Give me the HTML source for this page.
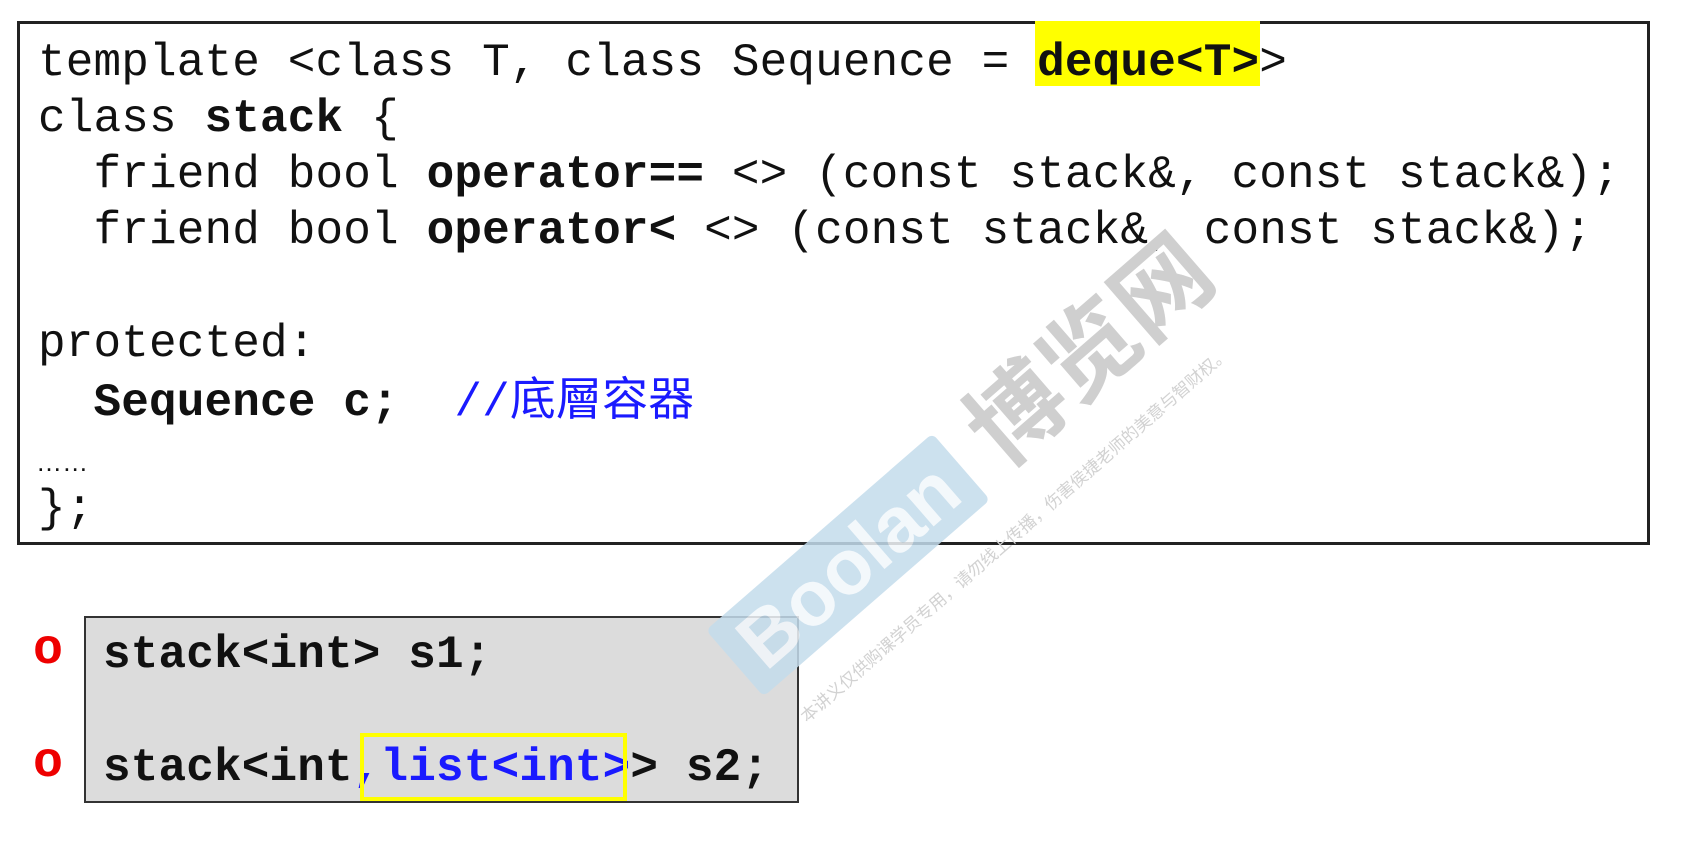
<!DOCTYPE html>
<html><head><meta charset="utf-8"><style>
html,body{margin:0;padding:0;background:#fff;width:1684px;height:860px;overflow:hidden;position:relative}
.m{font-family:"Liberation Mono","Courier New",monospace;font-size:46px;white-space:pre;position:absolute;line-height:56px;color:#111;letter-spacing:0.15px}
b{font-weight:bold}
#box{position:absolute;left:17px;top:21px;width:1627px;height:518px;border:3px solid #222}
#hl{position:absolute;left:1035px;top:21px;width:225px;height:65px;background:#ffff00}
#g{position:absolute;left:84px;top:616px;width:711px;height:183px;background:#dcdcdc;border:2px solid #333}
#yb{position:absolute;left:360px;top:733px;width:259px;height:60px;border:4px solid #ffff00}
.o{position:absolute;color:#ee0000;font-family:"Liberation Mono",monospace;font-weight:bold;font-size:50px;line-height:56px}
.cjk{font-family:"Liberation Sans","Noto Sans CJK TC",sans-serif;color:#1a1aff}
</style></head><body>
<div id="box"></div>
<div id="hl"></div>
<div class="m" style="left:38px;top:35px">template &lt;class T, class Sequence = <b>deque&lt;T&gt;</b>&gt;</div>
<div class="m" style="left:38px;top:91px">class <b>stack</b> {</div>
<div class="m" style="left:38px;top:147px">  friend bool <b>operator==</b> &lt;&gt; (const stack&amp;, const stack&amp;);</div>
<div class="m" style="left:38px;top:203px">  friend bool <b>operator&lt;</b> &lt;&gt; (const stack&amp;, const stack&amp;);</div>
<div class="m" style="left:38px;top:316px">protected:</div>
<div class="m" style="left:38px;top:371px">  <b>Sequence c;</b>  <span style="color:#1a1aff">//</span><span class="cjk">底層容器</span></div>
<div class="m" style="left:36px;top:434px;font-size:26px;font-family:'Liberation Sans',sans-serif">……</div>
<div class="m" style="left:38px;top:481px">};</div>

<div id="g"></div>
<div class="o" style="left:33px;top:623px">o</div>
<div class="o" style="left:33px;top:736px">o</div>
<div class="m" style="left:103px;top:627px"><b>stack&lt;int&gt; s1;</b></div>
<div class="m" style="left:103px;top:740px"><b>stack&lt;int<span style="color:#1a1aff">,list&lt;int&gt;</span>&gt; s2;</b></div>
<div id="yb"></div>

<div style="position:absolute;left:848px;top:565px;width:0;height:0;opacity:0.85">
 <div style="position:absolute;left:-150px;top:-44px;width:300px;height:88px;background:#c4dcec;border-radius:6px;transform:rotate(-41deg);font-family:'Liberation Sans',sans-serif;font-weight:bold;font-size:78px;line-height:88px;text-align:center;color:#f2f7fb">Boolan</div>
</div>
<div style="position:absolute;left:1085px;top:345px;width:0;height:0">
 <div style="position:absolute;left:-170px;top:-55px;width:340px;height:110px;transform:rotate(-41deg);font-family:'Noto Sans CJK SC',sans-serif;font-weight:bold;font-size:96px;line-height:110px;text-align:center;color:#cfcfcf;white-space:nowrap">博览网</div>
</div>
<div style="position:absolute;left:1014px;top:534px;width:0;height:0">
 <div style="position:absolute;left:-310px;top:-12px;width:620px;height:24px;transform:rotate(-41deg);font-family:'Noto Sans CJK SC',sans-serif;font-size:17px;line-height:24px;text-align:center;color:#d2d2d2;white-space:nowrap">本讲义仅供购课学员专用，请勿线上传播，伤害侯捷老师的美意与智财权。</div>
</div>
</body></html>
